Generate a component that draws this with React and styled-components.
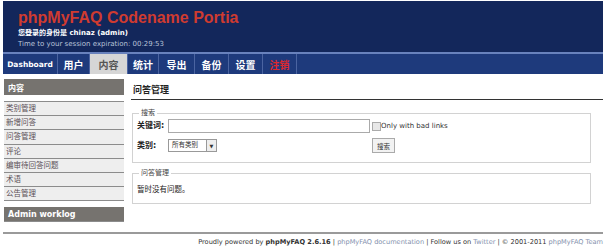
import React from 'react';
import styled, { createGlobalStyle } from 'styled-components';

const GlobalStyle = createGlobalStyle`
  html, body {
    margin: 0;
    padding: 0;
    background: #fff;
  }
  body {
    font-family: "DejaVu Sans", Verdana, "Noto Sans CJK SC", sans-serif;
    color: #333;
  }
`;

const Page = styled.div`
  width: 600px;
  padding: 1px 5px 0 3px;
`;

const Header = styled.header`
  height: 51px;
  box-sizing: border-box;
  padding: 7px 15px 0;
  background: #13275b;
`;

const Title = styled.h1`
  margin: 0;
  font-family: "Liberation Sans", Arial, sans-serif;
  font-size: 16px;
  font-weight: bold;
  line-height: 20px;
  color: #cf3b30;
`;

const HeaderLine = styled.div`
  font-size: 7px;
  line-height: 11px;
  color: ${(p) => (p.$muted ? '#b8c2d8' : '#fff')};
  font-weight: ${(p) => (p.$muted ? 'normal' : 'bold')};
`;

const Nav = styled.nav`
  display: flex;
  height: 20px;
  border-top: 2px solid #6982bd;
  background: #1e3a7c;
`;

const NavItem = styled.a`
  display: flex;
  align-items: center;
  justify-content: center;
  width: ${(p) => p.$w}px;
  border-right: 1px solid #4b64a1;
  font-size: ${(p) => (p.$latin ? '7.5px' : '10px')};
  font-weight: bold;
  color: ${(p) => (p.$danger ? '#e0282c' : p.$active ? '#555' : '#fff')};
  background: ${(p) => (p.$active ? '#d6d6d6' : 'transparent')};
  text-decoration: none;
`;

const Body = styled.div`
  display: flex;
  align-items: flex-start;
  margin-top: 5px;
  min-height: 153px;
`;

const Sidebar = styled.aside`
  width: 120px;
  margin-left: 1px;
  flex-shrink: 0;
`;

const SideHead = styled.div`
  height: ${(p) => p.$h}px;
  box-sizing: border-box;
  padding-left: 4px;
  display: flex;
  align-items: center;
  background: #76736f;
  color: #fff;
  font-size: 8px;
  font-weight: bold;
`;

const SideList = styled.ul`
  list-style: none;
  margin: 6px 0 6px;
  padding: 0;
  border-bottom: 1px solid #8c8c8c;
`;

const SideItem = styled.li`
  height: 13.2px;
  border-top: 1px solid #8c8c8c;
  background: #eeeeee;
  padding-left: 2px;
  font-size: 7.5px;
  line-height: 13px;
  color: #5a4e56;
`;

const SideFoot = styled.div`
  margin-top: 6px;
  border-bottom: 1px solid #8c8c8c;
`;

const Main = styled.main`
  flex: 1;
  margin-left: 7px;
`;

const PageTitle = styled.h2`
  margin: 4px 0 0;
  padding: 0 0 2px 2px;
  border-bottom: 1px solid #333;
  font-size: 9px;
  font-weight: bold;
  line-height: 14px;
  color: #222;
`;

const Fieldset = styled.fieldset`
  margin: ${(p) => p.$top}px 12px 0 1px;
  padding: ${(p) => p.$pad};
  border: 1px solid #d2d2d2;
`;

const Legend = styled.legend`
  padding: 0 2px;
  margin-left: 2px;
  font-size: 7px;
  line-height: 8px;
  color: #444;
`;

const FormGrid = styled.div`
  display: grid;
  grid-template-columns: 29px 202px auto;
  row-gap: 5px;
  column-gap: 2px;
  align-items: center;
`;

const Label = styled.label`
  font-size: 8px;
  line-height: 10px;
  font-weight: bold;
  color: #222;
`;

const TextInput = styled.input`
  display: block;
  box-sizing: border-box;
  width: 202px;
  height: 14px;
  border: 1px solid #aaa;
  padding: 0;
`;

const CheckLabel = styled.label`
  display: flex;
  align-items: center;
  font-size: 7px;
  line-height: 10px;
  color: #333;
`;

const Check = styled.span`
  width: 7px;
  height: 7px;
  border: 1px solid #aaa;
  background: #e8e8e8;
`;

const Select = styled.div`
  display: flex;
  align-items: stretch;
  width: 47px;
  height: 11px;
  border: 1px solid #999;
  font-size: 6.5px;
  color: #333;
`;

const SelectText = styled.span`
  flex: 1;
  padding-left: 3px;
  line-height: 11px;
`;

const SelectArrow = styled.span`
  width: 9px;
  border-left: 1px solid #999;
  background: #eee;
  display: flex;
  align-items: center;
  justify-content: center;
  font-size: 5px;
`;

const ButtonCell = styled.div`
  display: flex;
`;

const Button = styled.button`
  width: 23px;
  height: 15px;
  padding: 0;
  border: 1px solid #aaa;
  background: #f2f2f2;
  font-family: inherit;
  font-size: 6.5px;
  color: #333;
`;

const Note = styled.p`
  margin: 0;
  font-size: 7.5px;
  line-height: 10px;
  color: #222;
`;

const Footer = styled.footer`
  margin-top: 0;
  border-top: 2px solid #9a9a9a;
  padding-top: 4px;
  text-align: right;
  font-size: 6.6px;
  color: #333;
  white-space: nowrap;
`;

const FootLink = styled.a`
  color: #8390ad;
  text-decoration: none;
`;

const navItems = [
  { label: 'Dashboard', w: 54, latin: true },
  { label: '用户', w: 31 },
  { label: '内容', w: 37, active: true },
  { label: '统计', w: 30 },
  { label: '导出', w: 35 },
  { label: '备份', w: 33 },
  { label: '设置', w: 33 },
  { label: '注销', w: 33, danger: true },
];

const sideItems = ['类别管理', '新增问答', '问答管理', '评论', '编审待回答问题', '术语', '公告管理'];

export default function App() {
  return (
    <Page>
      <GlobalStyle />
      <Header>
        <Title>phpMyFAQ Codename Portia</Title>
        <HeaderLine>您登录的身份是 chinaz (admin)</HeaderLine>
        <HeaderLine $muted>Time to your session expiration: 00:29:53</HeaderLine>
      </Header>
      <Nav>
        {navItems.map((n) => (
          <NavItem key={n.label} $w={n.w} $latin={n.latin} $active={n.active} $danger={n.danger}>
            {n.label}
          </NavItem>
        ))}
      </Nav>
      <Body>
        <Sidebar>
          <SideHead $h={16}>内容</SideHead>
          <SideList>
            {sideItems.map((s) => (
              <SideItem key={s}>{s}</SideItem>
            ))}
          </SideList>
          <SideFoot>
            <SideHead $h={14}>Admin worklog</SideHead>
          </SideFoot>
        </Sidebar>
        <Main>
          <PageTitle>问答管理</PageTitle>
          <Fieldset $top={9} $pad="2px 4px 9px 4px">
            <Legend>搜索</Legend>
            <FormGrid>
              <Label>关键词:</Label>
              <TextInput type="text" />
              <CheckLabel>
                <Check />
                Only with bad links
              </CheckLabel>
              <Label>类别:</Label>
              <Select>
                <SelectText>所有类别</SelectText>
                <SelectArrow>▼</SelectArrow>
              </Select>
              <ButtonCell>
                <Button>搜索</Button>
              </ButtonCell>
            </FormGrid>
          </Fieldset>
          <Fieldset $top={6} $pad="8px 4px 8px 4px">
            <Legend>问答管理</Legend>
            <Note>暂时没有问题。</Note>
          </Fieldset>
        </Main>
      </Body>
      <Footer>
        Proudly powered by <b>phpMyFAQ 2.6.16</b> | <FootLink>phpMyFAQ documentation</FootLink> | Follow us on{' '}
        <FootLink>Twitter</FootLink> | © 2001-2011 <FootLink>phpMyFAQ Team</FootLink>
      </Footer>
    </Page>
  );
}
